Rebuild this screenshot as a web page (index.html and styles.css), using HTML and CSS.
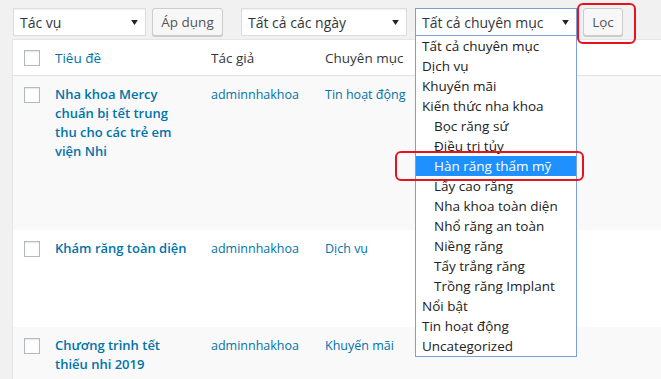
FILE: index.html
```html
<!DOCTYPE html>
<html lang="vi">
<head>
    <meta charset="UTF-8">
    <meta name="viewport" content="width=device-width, initial-scale=1.0">
    <title>Bài viết</title>
    <link rel="stylesheet" href="styles.css">
</head>
<body>
    <div class="page">
        <div class="tablenav">
            <div class="select select-actions">Tác vụ<svg class="arrow" viewBox="0 0 8 6"><polygon points="0,0 8,0 4,6"/></svg></div>
            <button class="button apply">Áp dụng</button>
            <div class="select select-dates">Tất cả các ngày<svg class="arrow" viewBox="0 0 8 6"><polygon points="0,0 8,0 4,6"/></svg></div>
            <div class="select-wrap">
                <div class="select select-cats">Tất cả chuyên mục<svg class="arrow" viewBox="0 0 8 6"><polygon points="0,0 8,0 4,6"/></svg></div>
                <ul class="dropdown">
                    <li>Tất cả chuyên mục</li>
                    <li>Dịch vụ</li>
                    <li>Khuyến mãi</li>
                    <li>Kiến thức nha khoa</li>
                    <li class="child">Bọc răng sứ</li>
                    <li class="child">Điều trị tủy</li>
                    <li class="child selected">Hàn răng thẩm mỹ</li>
                    <li class="child">Lấy cao răng</li>
                    <li class="child">Nha khoa toàn diện</li>
                    <li class="child">Nhổ răng an toàn</li>
                    <li class="child">Niềng răng</li>
                    <li class="child">Tẩy trắng răng</li>
                    <li class="child">Trồng răng Implant</li>
                    <li>Nổi bật</li>
                    <li>Tin hoạt động</li>
                    <li>Uncategorized</li>
                </ul>
            </div>
            <button class="button filter">Lọc</button>
        </div>

        <table class="posts">
            <thead>
                <tr>
                    <th class="col-cb"><span class="checkbox"></span></th>
                    <th class="col-title"><a href="#">Tiêu đề</a></th>
                    <th class="col-author">Tác giả</th>
                    <th class="col-cat">Chuyên mục</th>
                    <th></th>
                </tr>
            </thead>
            <tbody>
                <tr class="alt">
                    <td class="col-cb"><span class="checkbox"></span></td>
                    <td class="col-title"><a class="row-title" href="#">Nha khoa Mercy chuẩn bị tết trung thu cho các trẻ em viện Nhi</a><div class="row-actions"></div></td>
                    <td class="col-author"><a href="#">adminnhakhoa</a></td>
                    <td class="col-cat"><a href="#">Tin hoạt động</a></td>
                    <td></td>
                </tr>
                <tr>
                    <td class="col-cb"><span class="checkbox"></span></td>
                    <td class="col-title"><a class="row-title" href="#">Khám răng toàn diện</a><div class="row-actions"></div></td>
                    <td class="col-author"><a href="#">adminnhakhoa</a></td>
                    <td class="col-cat"><a href="#">Dịch vụ</a></td>
                    <td></td>
                </tr>
                <tr class="alt">
                    <td class="col-cb"><span class="checkbox"></span></td>
                    <td class="col-title"><a class="row-title" href="#">Chương trình tết thiếu nhi 2019</a><div class="row-actions"></div></td>
                    <td class="col-author"><a href="#">adminnhakhoa</a></td>
                    <td class="col-cat"><a href="#">Khuyến mãi</a></td>
                    <td></td>
                </tr>
            </tbody>
        </table>

        <!-- khung đỏ đánh dấu -->
        <div class="mark mark-filter"></div>
        <div class="mark mark-item"></div>
    </div>
</body>
</html>
```

FILE: styles.css
```css
body {
    margin: 0;
    background-color: #f1f1f1;
    font-family: "Open Sans", "Noto Sans", sans-serif;
    font-size: 13px;
    color: #32373c;
}
.page {
    position: relative;
    height: 379px;
    overflow: hidden;
    padding-left: 12px;
}
a {
    color: #0073aa;
    text-decoration: none;
}

/* thanh công cụ */
.tablenav {
    display: flex;
    align-items: flex-start;
    padding: 8px 0 0 1px;
    height: 31px;
}
.select {
    position: relative;
    box-sizing: border-box;
    height: 28px;
    line-height: 27px;
    padding: 0 6px;
    background-color: white;
    border: 1px solid #ddd;
    box-shadow: inset 0 1px 2px rgba(0,0,0,0.07);
    font-size: 14px;
    color: #32373c;
    white-space: nowrap;
}
.select .arrow {
    position: absolute;
    right: 7px;
    top: 11px;
    width: 7px;
    height: 5px;
    fill: #222;
}
.select-actions {
    width: 133px;
}
.select-dates {
    width: 166px;
    margin-left: 18px;
}
.select-wrap {
    position: relative;
    margin-left: 8px;
}
.select-cats {
    width: 162px;
    border-color: #7e9ed8;
    box-shadow: none;
}
.button {
    box-sizing: border-box;
    height: 28px;
    padding: 0;
    background-color: #f7f7f7;
    border: 1px solid #ccc;
    border-radius: 3px;
    box-shadow: 0 1px 0 #ccc;
    font-family: inherit;
    font-size: 13.5px;
    color: #555;
    white-space: nowrap;
}
.apply {
    width: 71px;
    margin-left: 6px;
}
.filter {
    width: 40px;
    margin-left: 6px;
}

/* danh sách mở của select */
.dropdown {
    position: absolute;
    top: 28px;
    left: 0;
    z-index: 2;
    box-sizing: border-box;
    width: 162px;
    margin: 0;
    padding: 0;
    list-style: none;
    background-color: white;
    border: 1px solid #7e9ed8;
    border-top: none;
}
.dropdown li {
    height: 20px;
    line-height: 21px;
    padding-left: 6px;
    font-size: 13.5px;
    color: #222;
    white-space: nowrap;
}
.dropdown li.child {
    padding-left: 18px;
}
.dropdown li.selected {
    background-color: #1e90ff;
    color: white;
}

/* bảng bài viết */
.posts {
    width: 760px;
    border-collapse: separate;
    border-spacing: 0;
    border: 1px solid #e5e5e5;
    background-color: white;
    table-layout: fixed;
}
.posts th {
    height: 35px;
    padding: 0 10px;
    text-align: left;
    font-weight: normal;
    font-size: 13.5px;
    border-bottom: 1px solid #e1e1e1;
}
.posts td {
    vertical-align: top;
    padding: 9px 10px 0;
    line-height: 19px;
    font-size: 12.5px;
}
.posts tr.alt td {
    background-color: #f9f9f9;
}
.posts .col-cb {
    width: 21px;
    padding: 0 0 0 11px;
}
.posts td.col-cb {
    padding-top: 11px;
}
.posts .col-title {
    width: 137px;
    padding-right: 9px;
}
.posts .col-author {
    width: 94px;
}
.posts .col-cat {
    width: 120px;
}
.checkbox {
    display: block;
    box-sizing: border-box;
    width: 16px;
    height: 16px;
    background-color: white;
    border: 1px solid #b4b9be;
    box-shadow: inset 0 1px 2px rgba(0,0,0,0.1);
}
.row-title {
    font-size: 13px;
    font-weight: 600;
}
.row-actions {
    height: 69px;
}

/* khung đánh dấu màu đỏ */
.mark {
    position: absolute;
    box-sizing: border-box;
    border: 2px solid #e8121c;
    border-radius: 6px;
    z-index: 3;
}
.mark-filter {
    left: 577px;
    top: 3px;
    width: 59px;
    height: 41px;
}
.mark-item {
    left: 395px;
    top: 151px;
    width: 189px;
    height: 30px;
}
```
